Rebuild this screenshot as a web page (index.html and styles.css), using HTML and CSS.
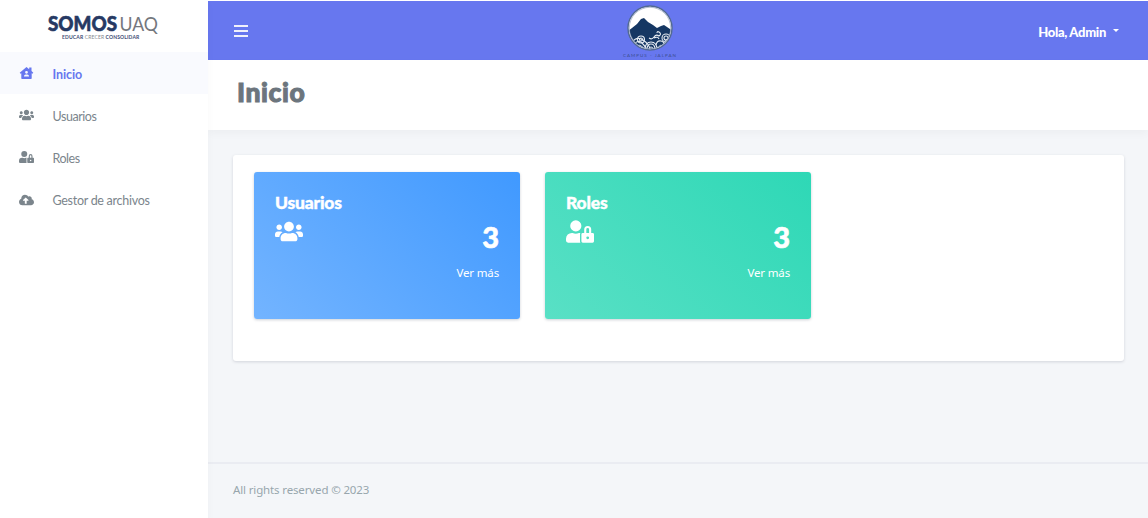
FILE: index.html
```html
<!DOCTYPE html>
<html lang="es">
<head>
<meta charset="utf-8">
<title>Inicio</title>
<link rel="stylesheet" href="styles.css">
</head>
<body>
<svg class="sprite" aria-hidden="true">
  <symbol id="users" viewBox="0 0 640 512"><path d="M96 224c35.3 0 64-28.700 64-64s-28.700-64-64-64-64 28.700-64 64 28.700 64 64 64zm448 0c35.300 0 64-28.700 64-64s-28.700-64-64-64-64 28.700-64 64 28.700 64 64 64zm32 32h-64c-17.600 0-33.500 7.100-45.100 18.600 40.300 22.100 68.900 62 75.100 109.400h66c17.700 0 32-14.300 32-32v-32c0-35.300-28.700-64-64-64zm-256 0c61.900 0 112-50.100 112-112S381.900 32 320 32 208 82.100 208 144s50.100 112 112 112zm76.800 32h-8.300c-20.800 10-43.900 16-68.500 16s-47.600-6-68.500-16h-8.300C179.600 288 128 339.600 128 403.200V432c0 26.500 21.500 48 48 48h288c26.500 0 48-21.500 48-48v-28.800c0-63.600-51.600-115.200-115.200-115.200zm-223.700-13.400C161.500 263.100 145.600 256 128 256H64c-35.300 0-64 28.700-64 64v32c0 17.700 14.300 32 32 32h65.900c6.300-47.400 34.900-87.300 75.200-109.400z"/></symbol>
  <symbol id="user-lock" viewBox="0 0 640 512"><path d="M224 256A128 128 0 1 0 96 128a128 128 0 0 0 128 128zm96 64a63.080 63.080 0 0 1 8.100-30.500c-4.800-.5-9.500-1.500-14.500-1.500h-16.700a174.080 174.080 0 0 1-145.800 0h-16.700A134.430 134.430 0 0 0 0 422.400V464a48 48 0 0 0 48 48h280.900a63.540 63.540 0 0 1-8.900-32zm288-32h-32v-80a80 80 0 0 0-160 0v80h-32a32 32 0 0 0-32 32v160a32 32 0 0 0 32 32h224a32 32 0 0 0 32-32V320a32 32 0 0 0-32-32zM496 432a32 32 0 1 1 32-32 32 32 0 0 1-32 32zm32-144h-64v-80a32 32 0 0 1 64 0z"/></symbol>
  <symbol id="cloud" viewBox="0 0 640 512"><path d="M537.600 226.600c4.100-10.700 6.400-22.400 6.400-34.600 0-53-43-96-96-96-19.700 0-38.100 6-53.300 16.200C367 64.200 315.300 32 256 32c-88.400 0-160 71.600-160 160 0 2.700.1 5.400.2 8.100C40.200 219.800 0 273.200 0 336c0 79.500 64.500 144 144 144h368c70.700 0 128-57.300 128-128 0-61.900-44-113.600-102.400-125.400zM393.400 288H328v112c0 8.800-7.200 16-16 16h-48c-8.800 0-16-7.200-16-16V288h-65.400c-14.300 0-21.400-17.200-11.300-27.300l105.400-105.400c6.200-6.200 16.400-6.200 22.600 0l105.400 105.400c10.100 10.100 2.900 27.300-11.300 27.300z"/></symbol>
  <symbol id="house" viewBox="0 0 14 12"><path fill-rule="evenodd" d="M7 .1 9.700 2.200V.5h2.300v3.600l1.800 1.700-.8 1-.8-.5v5q0 .7-.7.700H2.500q-.7 0-.7-.7v-5l-.8.5-.8-1zM7 3.900a1.400 1.400 0 1 0 0 2.800 1.400 1.400 0 0 0 0-2.800zM4.400 9.600h5.200Q9.400 7.500 7.800 7.500H6.200Q4.600 7.500 4.400 9.600z"/></symbol>
</svg>
<div class="app">
  <aside class="sidebar">
    <div class="brand">
      <svg class="wordmark" width="114" height="20" viewBox="0 0 114 20">
        <text class="brand-bold" x="1" y="17.500" textLength="69" lengthAdjust="spacingAndGlyphs">SOMOS</text>
        <text class="brand-light" x="72.500" y="17.500" textLength="38.500" lengthAdjust="spacingAndGlyphs">UAQ</text>
      </svg>
      <div class="tagline">EDUCAR <span>CRECER</span> CONSOLIDAR</div>
    </div>
    <nav class="menu">
      <a class="item active"><svg class="icon"><use href="#house"/></svg><span>Inicio</span></a>
      <a class="item"><svg class="icon"><use href="#users"/></svg><span>Usuarios</span></a>
      <a class="item"><svg class="icon"><use href="#user-lock"/></svg><span>Roles</span></a>
      <a class="item"><svg class="icon"><use href="#cloud"/></svg><span class="long">Gestor de archivos</span></a>
    </nav>
  </aside>
  <div class="main">
    <header class="topbar">
      <div class="burger"><i></i><i></i><i></i></div>
      <svg class="campus" width="56" height="56" viewBox="0 0 56 56">
        <defs><clipPath id="disc"><circle cx="28" cy="25" r="20.700"/></clipPath></defs>
        <circle cx="28" cy="25" r="22" fill="#fff" stroke="#526a92" stroke-width="1.400"/>
        <g clip-path="url(#disc)">
          <path fill="#153763" d="M6 28 10 25l5-4 4-5 3-1 4 4 5 3 4 3 4-2 3-1 3 2 6 4v22H6z"/>
          <g fill="none" stroke="#e5ebf2" stroke-width="1.100">
            <path d="M10 39q5-6 11-2t7 9M11 42q5-6 9-2t5 7M14 44q4-4 8 2"/>
            <circle cx="19" cy="36.500" r="3.500"/><circle cx="19" cy="36.500" r="1.500"/>
            <path d="M23 47q0-8 6-8t6 8M25 47q0-6 4-6t4 6M27 47q0-3 2-3t2 3"/>
            <path d="M27 35q3 2 5-1t5-1q3-2 0-4-2-1-2 1M32 35q4-2 5 1"/>
            <path d="M34 42q1-5 5-4t2 4-3 0M35 45q7 1 8-5t6-3M37 47q8-1 9-7"/>
            <circle cx="44" cy="35" r="4"/><circle cx="44" cy="35" r="2"/>
          </g>
        </g>
        <circle cx="28" cy="25" r="20.700" fill="none" stroke="#8999b5" stroke-width=".6"/>
        <text class="campus-text" x="1" y="54" textLength="53">CAMPUS - JALPAN</text>
      </svg>
      <div class="user"><span>Hola, Admin</span><b class="caret"></b></div>
    </header>
    <div class="heading"><h1>Inicio</h1></div>
    <main class="content">
      <section class="panel">
        <article class="card blue">
          <h2>Usuarios</h2>
          <svg class="big"><use href="#users"/></svg>
          <strong>3</strong>
          <a>Ver más</a>
        </article>
        <article class="card green">
          <h2>Roles</h2>
          <svg class="big"><use href="#user-lock"/></svg>
          <strong>3</strong>
          <a>Ver más</a>
        </article>
      </section>
    </main>
    <footer class="footer">All rights reserved © 2023</footer>
  </div>
</div>
</body>
</html>
```
FILE: styles.css
```css
* { box-sizing: border-box; }
body { margin: 0; background: #fff; font-family: Lato, sans-serif; }
.sprite { display: none; }
.app { display: flex; height: 518px; overflow: hidden; }
.sidebar { width: 208px; flex: none; background: #fff; box-shadow: 0 4px 8px rgba(0,0,0,.03); z-index: 1; }
.brand { height: 52px; padding: 13px 0 0 47px; }
.wordmark { display: block; overflow: visible; }
.brand-bold { font: 900 20px Lato, sans-serif; fill: #263963; stroke: #263963; stroke-width: .6px; }
.brand-light { font: 400 20px Lato, sans-serif; fill: #74777d; }
.tagline { width: 80px; margin-left: 15px; font: 700 5px/8px Lato, sans-serif; letter-spacing: .15px; white-space: nowrap; color: #3c4d75; }
.tagline span { color: #85888e; font-weight: 400; }
.item { display: flex; align-items: center; height: 42.200px; padding-left: 19px; color: #7b858c; font-size: 12.500px; }
.item span { margin: 2px 0 0 18.500px; letter-spacing: -.45px; }
.item .long { letter-spacing: -.28px; }
.item.active { background: #f9fafe; color: #6777ef; }
.item.active span { font-weight: 700; letter-spacing: -.1px; }
.icon { width: 15px; height: 12px; fill: currentColor; }
.main { flex: 1; display: flex; flex-direction: column; background: #f4f6f9; border-top: 1px solid #fff; }
.topbar { height: 59px; flex: none; background: #6777ef; display: flex; align-items: center; padding: 0 29px 0 26px; }
.burger { display: flex; flex-direction: column; gap: 3px; width: 14px; padding-top: 1px; }
.burger i { height: 2px; background: #f0f0fb; }
.campus { display: block; margin-left: 374px; }
.campus-text { font: 4.500px Lato, sans-serif; fill: #3c4e90; }
.user { display: flex; align-items: center; margin-left: auto; gap: 7px; color: #fff; font-size: 13px; font-weight: 900; letter-spacing: -.3px; padding-top: 2px; }
.caret { border: 3px solid transparent; border-top-color: #fff; border-bottom: 0; margin-top: -2px; }
.heading { height: 70px; flex: none; background: #fff; padding: 13px 29px; box-shadow: 0 4px 8px rgba(0,0,0,.03); }
h1 { margin: 0; font-size: 26.500px; line-height: 38px; font-weight: 900; color: #6c757d; letter-spacing: .6px; -webkit-text-stroke: 1px #6c757d; }
.content { padding: 25px 24px 0 25px; height: 332px; flex: none; }
.panel { height: 206px; background: #fff; border-radius: 3px; box-shadow: 0 1px 3px rgba(40,50,80,.17); padding: 17px 21px; display: flex; gap: 25px; }
.card { width: 266px; height: 147px; border-radius: 3px; padding: 20px 21px; color: #fff; display: flex; flex-direction: column; box-shadow: 0 1px 3px rgba(4,26,55,.2); }
.blue { background: linear-gradient(45deg, #73b4ff, #4099ff); }
.green { background: linear-gradient(45deg, #59e0c5, #2ed8b6); }
h2 { margin: 0; font-size: 17.500px; line-height: 22px; font-weight: 900; letter-spacing: -.2px; -webkit-text-stroke: .4px #fff; }
.big { width: 28px; height: 23px; fill: #fff; margin-top: 6px; }
.card strong { font-size: 29px; font-weight: 900; line-height: 34px; align-self: flex-end; margin-top: -23px; -webkit-text-stroke: .6px #fff; }
.card a { align-self: flex-end; font: 11.500px/18px "Noto Sans", sans-serif; letter-spacing: -.15px; margin-top: 10px; }
.footer { border-top: 2px solid #eaecf2; flex: 1; padding: 17px 25px; color: #98a6ad; font: 11.500px/18px "Noto Sans", sans-serif; letter-spacing: -.14px; }
```
